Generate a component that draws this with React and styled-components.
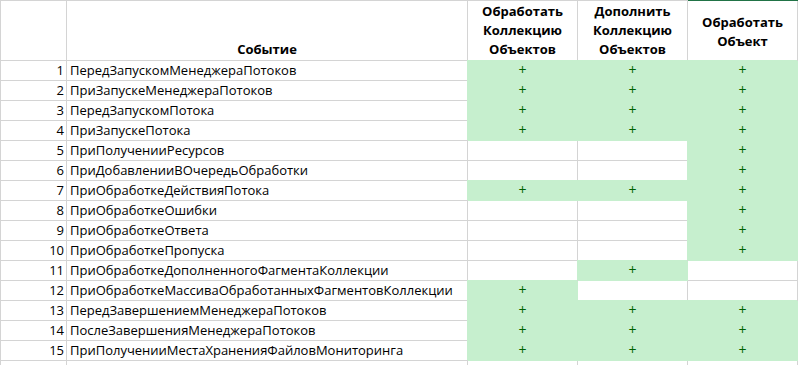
import React from 'react';
import styled, { createGlobalStyle } from 'styled-components';

const GlobalStyle = createGlobalStyle`
  html, body {
    margin: 0;
    padding: 0;
    background: #ffffff;
  }
  body {
    font-family: "Open Sans", "Liberation Sans", sans-serif;
    color: #000000;
  }
`;

const GRID = '#d4d4d4';
const GOOD = '#c6efce';

const Sheet = styled.div`
  display: grid;
  grid-template-columns: 66px 401px 110px 110px 110px;
  grid-auto-rows: 20px;
  width: max-content;
  border-left: 1px solid ${GRID};
  border-top: 1px solid ${GRID};
  font-size: 13px;
`;

const Cell = styled.div`
  box-sizing: border-box;
  display: flex;
  align-items: flex-end;
  padding: 0 3px 1px;
  border-right: 1px solid ${GRID};
  border-bottom: 1px solid ${GRID};
  white-space: nowrap;
  overflow: visible;
  line-height: 18px;
`;

const HeadCell = styled(Cell)`
  grid-row: span 3;
  flex-direction: column;
  justify-content: ${p => (p.$center ? 'center' : 'flex-end')};
  align-items: center;
  padding: ${p => (p.$center ? '2px 0 0' : '0 0 1px')};
  font-weight: 700;
  line-height: 19px;
  text-align: center;
  box-shadow: ${p => (p.$active ? '0 -1px 0 #217346' : 'none')};
`;

const NumCell = styled(Cell)`
  justify-content: flex-end;
  padding-right: 2px;
`;

const MarkCell = styled(Cell)`
  justify-content: center;
  color: #006100;
  font-size: 14px;
  background: ${p => (p.$on ? GOOD : 'transparent')};
  border-color: ${p => (p.$on ? GOOD : GRID)};
  box-shadow: ${p => (p.$on ? `-1px -1px 0 ${GOOD}` : 'none')};
`;

const events = [
  ['ПередЗапускомМенеджераПотоков', 1, 1, 1],
  ['ПриЗапускеМенеджераПотоков', 1, 1, 1],
  ['ПередЗапускомПотока', 1, 1, 1],
  ['ПриЗапускеПотока', 1, 1, 1],
  ['ПриПолученииРесурсов', 0, 0, 1],
  ['ПриДобавленииВОчередьОбработки', 0, 0, 1],
  ['ПриОбработкеДействияПотока', 1, 1, 1],
  ['ПриОбработкеОшибки', 0, 0, 1],
  ['ПриОбработкеОтвета', 0, 0, 1],
  ['ПриОбработкеПропуска', 0, 0, 1],
  ['ПриОбработкеДополненногоФагментаКоллекции', 0, 1, 0],
  ['ПриОбработкеМассиваОбработанныхФагментовКоллекции', 1, 0, 0],
  ['ПередЗавершениемМенеджераПотоков', 1, 1, 1],
  ['ПослеЗавершенияМенеджераПотоков', 1, 1, 1],
  ['ПриПолученииМестаХраненияФайловМониторинга', 1, 1, 1],
];

export default function App() {
  return (
    <>
      <GlobalStyle />
      <Sheet>
        <HeadCell />
        <HeadCell>Событие</HeadCell>
        <HeadCell>
          <span>Обработать</span>
          <span>Коллекцию</span>
          <span>Объектов</span>
        </HeadCell>
        <HeadCell>
          <span>Дополнить</span>
          <span>Коллекцию</span>
          <span>Объектов</span>
        </HeadCell>
        <HeadCell $center $active>
          <span>Обработать</span>
          <span>Объект</span>
        </HeadCell>

        {events.map(([name, ...marks], i) => (
          <React.Fragment key={name}>
            <NumCell>{i + 1}</NumCell>
            <Cell>{name}</Cell>
            {marks.map((m, j) => (
              <MarkCell key={j} $on={!!m}>
                {m ? '+' : ''}
              </MarkCell>
            ))}
          </React.Fragment>
        ))}

        <Cell />
        <Cell />
        <Cell />
        <Cell />
        <Cell />
      </Sheet>
    </>
  );
}
